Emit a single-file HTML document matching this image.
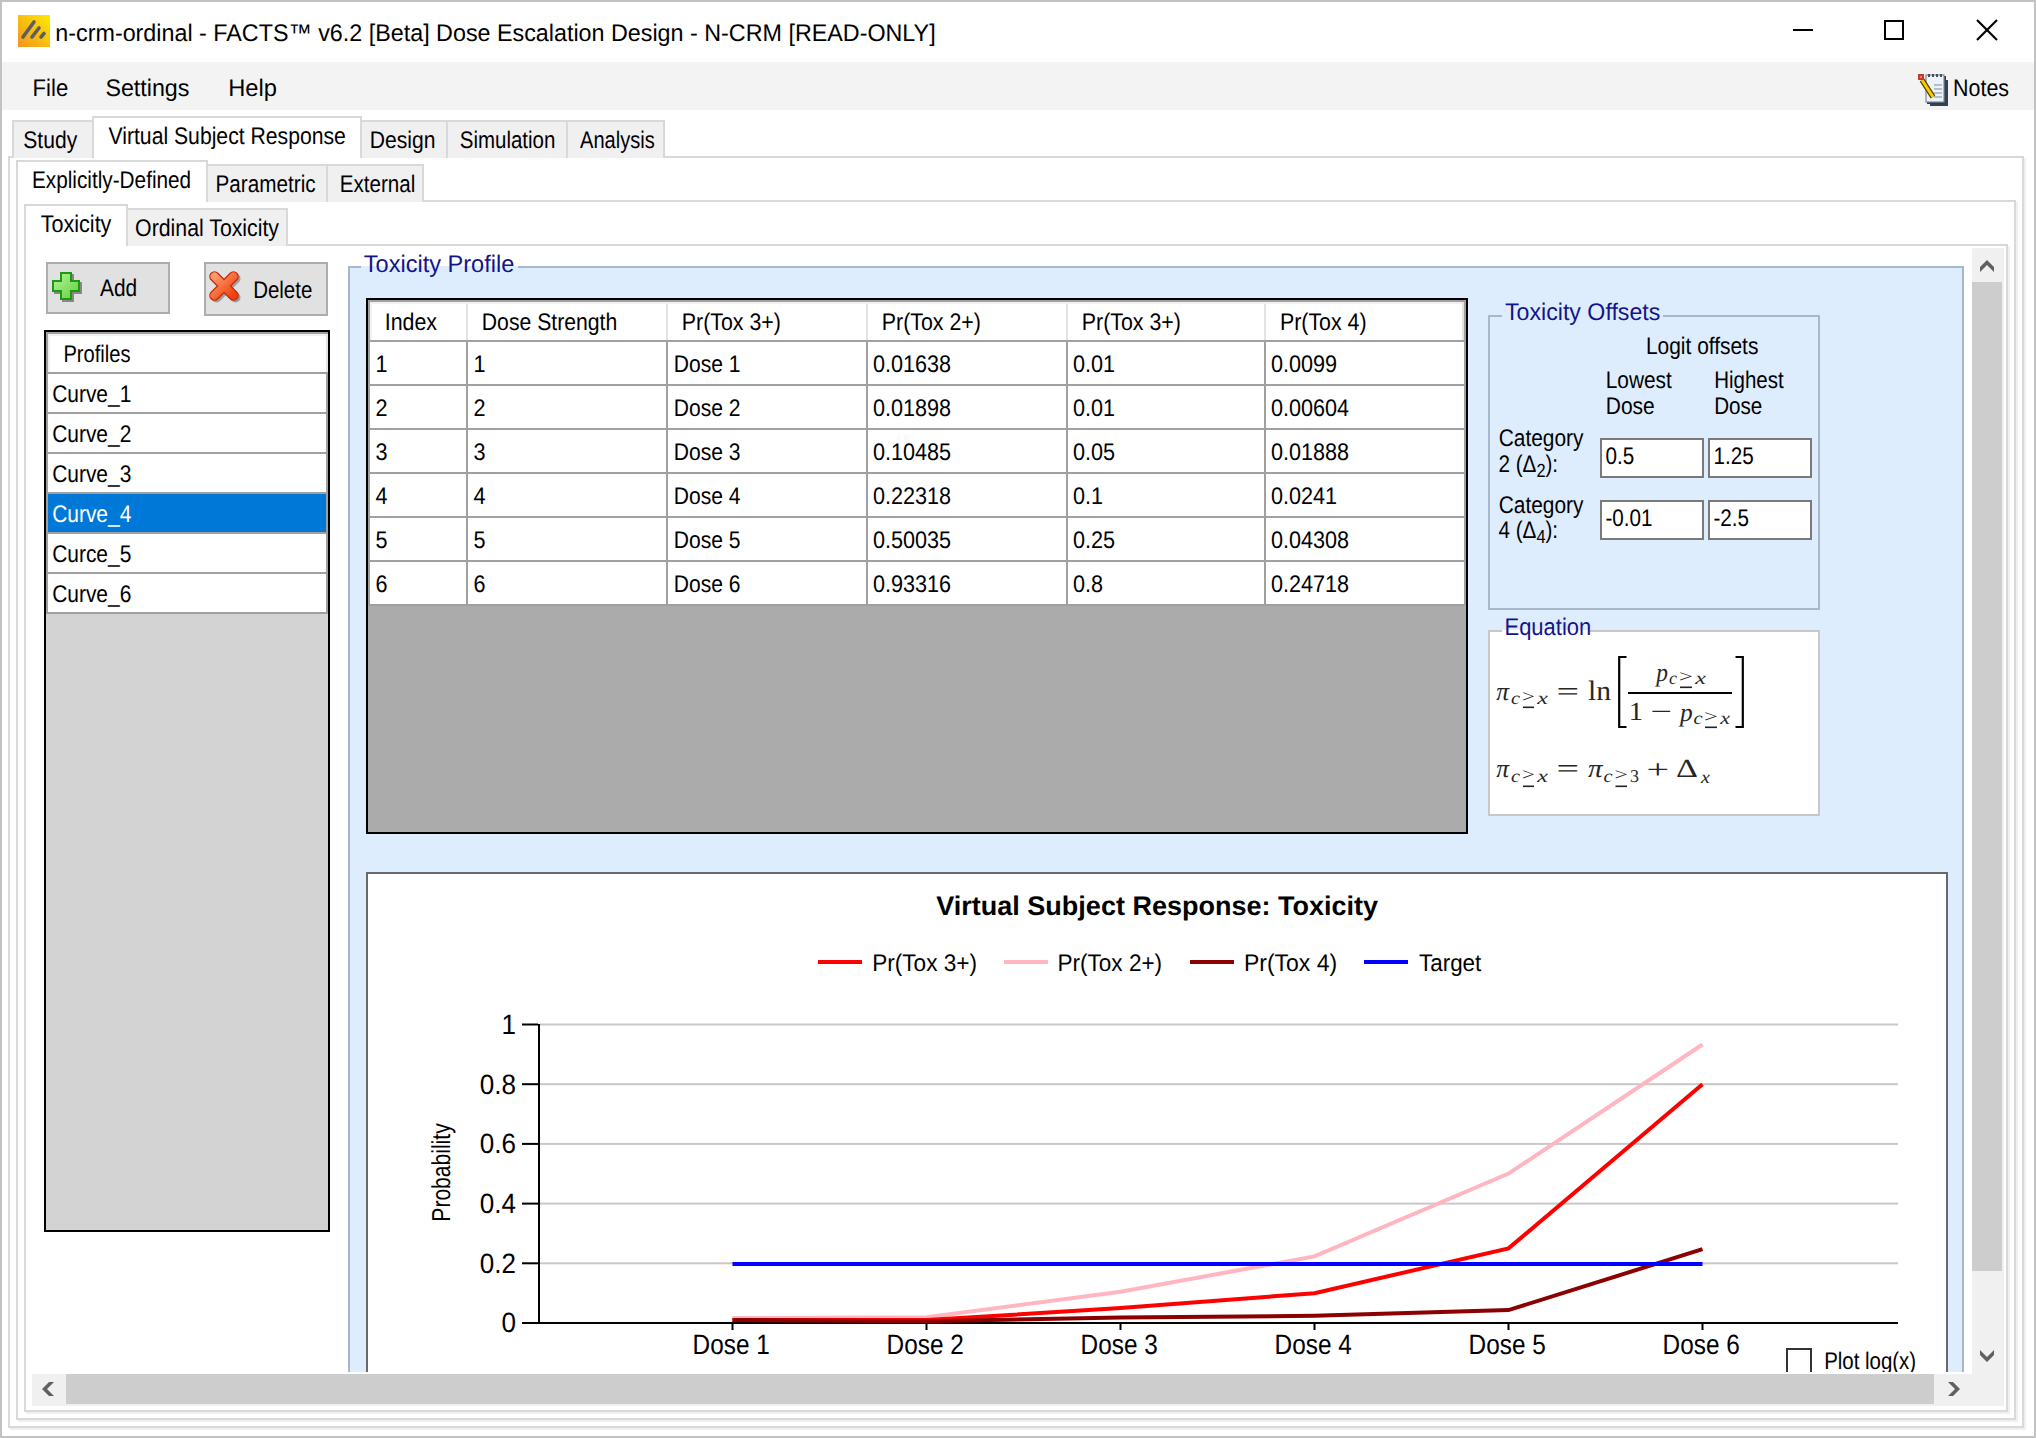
<!DOCTYPE html>
<html><head><meta charset="utf-8"><title>FACTS</title>
<style>html,body{margin:0;padding:0;background:#fff;overflow:hidden}svg{display:block}</style>
</head><body>
<svg width="2036" height="1438" viewBox="0 0 2036 1438" text-rendering="geometricPrecision">
<rect x="0" y="0" width="2036" height="1438" fill="#ffffff" />
<defs><linearGradient id="ig" x1="1" y1="0" x2="0" y2="1"><stop offset="0" stop-color="#ffea00"/><stop offset="1" stop-color="#f29420"/></linearGradient><linearGradient id="pg" x1="0" y1="0" x2="1" y2="1"><stop offset="0" stop-color="#b4f59a"/><stop offset="1" stop-color="#62cf3c"/></linearGradient><linearGradient id="xg" x1="0" y1="0" x2="1" y2="1"><stop offset="0" stop-color="#ff9a6a"/><stop offset="1" stop-color="#f0400c"/></linearGradient><clipPath id="clipPanel"><rect x="26" y="246" width="1946" height="1126"/></clipPath></defs>
<rect x="18" y="15" width="32" height="32" fill="url(#ig)" />
<g stroke="#5e5e5e" stroke-width="3.6" stroke-linecap="round"><line x1="23" y1="37" x2="34" y2="22"/><line x1="32" y1="37" x2="39" y2="28"/><line x1="41" y1="37" x2="44" y2="33.5"/></g>
<text transform="translate(55.33,40.8) scale(0.9711,1)" font-family="'Liberation Sans', sans-serif" font-size="24" font-weight="normal" font-style="normal" fill="#000" text-anchor="start" >n-crm-ordinal - FACTS™ v6.2 [Beta] Dose Escalation Design - N-CRM [READ-ONLY]</text>
<rect x="1793" y="29" width="20" height="2" fill="#000" />
<rect x="1884" y="20" width="20" height="2" fill="#000" />
<rect x="1884" y="38" width="20" height="2" fill="#000" />
<rect x="1884" y="20" width="2" height="20" fill="#000" />
<rect x="1902" y="20" width="2" height="20" fill="#000" />
<g stroke="#000" stroke-width="2.2"><line x1="1977" y1="20" x2="1997" y2="40"/><line x1="1997" y1="20" x2="1977" y2="40"/></g>
<rect x="2" y="62" width="2032" height="48" fill="#f3f3f3" />
<text transform="translate(32.58,95.5) scale(0.9217,1)" font-family="'Liberation Sans', sans-serif" font-size="24" font-weight="normal" font-style="normal" fill="#000" text-anchor="start" >File</text>
<text transform="translate(105.43,95.5) scale(0.9683,1)" font-family="'Liberation Sans', sans-serif" font-size="24" font-weight="normal" font-style="normal" fill="#000" text-anchor="start" >Settings</text>
<text transform="translate(228.21,95.5) scale(0.9873,1)" font-family="'Liberation Sans', sans-serif" font-size="24" font-weight="normal" font-style="normal" fill="#000" text-anchor="start" >Help</text>
<g><rect x="1927" y="76" width="19" height="28" fill="#2f3c4a"/><rect x="1926" y="75" width="18" height="27" fill="#eef3fb" stroke="#7d8a98" stroke-width="1.2"/><rect x="1945" y="80" width="3" height="26" fill="#34414f"/><rect x="1930" y="104" width="18" height="2" fill="#34414f"/><g fill="#45505c"><rect x="1928" y="74" width="2" height="3"/><rect x="1932" y="74" width="2" height="3"/><rect x="1936" y="74" width="2" height="3"/><rect x="1940" y="74" width="2" height="3"/></g><g stroke="#9fb3cc" stroke-width="1.6"><line x1="1934" y1="85" x2="1942" y2="85"/><line x1="1934" y1="89" x2="1942" y2="89"/><line x1="1934" y1="93" x2="1942" y2="93"/><line x1="1934" y1="97" x2="1942" y2="97"/></g><line x1="1933" y1="97" x2="1922" y2="80" stroke="#5a4400" stroke-width="5.5"/><line x1="1933" y1="97" x2="1922" y2="80" stroke="#f5d000" stroke-width="3"/><rect x="1918" y="74" width="6" height="6" fill="#c83a2a"/><rect x="1920" y="76" width="2" height="2" fill="#ff7a6a"/></g>
<text transform="translate(1953.11,96) scale(0.8915,1)" font-family="'Liberation Sans', sans-serif" font-size="24" font-weight="normal" font-style="normal" fill="#000" text-anchor="start" >Notes</text>
<rect x="8" y="156" width="2016" height="2" fill="#d9d9d9" />
<rect x="8" y="1426" width="2016" height="2" fill="#d9d9d9" />
<rect x="8" y="156" width="2" height="1272" fill="#d9d9d9" />
<rect x="2022" y="156" width="2" height="1272" fill="#d9d9d9" />
<rect x="2024" y="158" width="2" height="1272" fill="#f0f0f0" />
<rect x="10" y="1428" width="2016" height="2" fill="#f0f0f0" />
<rect x="12" y="120" width="82" height="38" fill="#f0f0f0" />
<rect x="12" y="120" width="82" height="2" fill="#d9d9d9" />
<rect x="12" y="120" width="2" height="38" fill="#d9d9d9" />
<rect x="92" y="120" width="2" height="38" fill="#d9d9d9" />
<rect x="360" y="120" width="88" height="38" fill="#f0f0f0" />
<rect x="360" y="120" width="88" height="2" fill="#d9d9d9" />
<rect x="360" y="120" width="2" height="38" fill="#d9d9d9" />
<rect x="446" y="120" width="2" height="38" fill="#d9d9d9" />
<rect x="446" y="120" width="122" height="38" fill="#f0f0f0" />
<rect x="446" y="120" width="122" height="2" fill="#d9d9d9" />
<rect x="446" y="120" width="2" height="38" fill="#d9d9d9" />
<rect x="566" y="120" width="2" height="38" fill="#d9d9d9" />
<rect x="566" y="120" width="99" height="38" fill="#f0f0f0" />
<rect x="566" y="120" width="99" height="2" fill="#d9d9d9" />
<rect x="566" y="120" width="2" height="38" fill="#d9d9d9" />
<rect x="663" y="120" width="2" height="38" fill="#d9d9d9" />
<rect x="92" y="116" width="270" height="42" fill="#ffffff" />
<rect x="92" y="116" width="270" height="2" fill="#d9d9d9" />
<rect x="92" y="116" width="2" height="42" fill="#d9d9d9" />
<rect x="360" y="116" width="2" height="42" fill="#d9d9d9" />
<text transform="translate(23.32,147.7) scale(0.8779,1)" font-family="'Liberation Sans', sans-serif" font-size="24" font-weight="normal" font-style="normal" fill="#000" text-anchor="start" >Study</text>
<text transform="translate(108.5,143.6) scale(0.882,1)" font-family="'Liberation Sans', sans-serif" font-size="24" font-weight="normal" font-style="normal" fill="#000" text-anchor="start" >Virtual Subject Response</text>
<text transform="translate(369.82,147.7) scale(0.8789,1)" font-family="'Liberation Sans', sans-serif" font-size="24" font-weight="normal" font-style="normal" fill="#000" text-anchor="start" >Design</text>
<text transform="translate(459.75,147.7) scale(0.8532,1)" font-family="'Liberation Sans', sans-serif" font-size="24" font-weight="normal" font-style="normal" fill="#000" text-anchor="start" >Simulation</text>
<text transform="translate(580.0,147.7) scale(0.8359,1)" font-family="'Liberation Sans', sans-serif" font-size="24" font-weight="normal" font-style="normal" fill="#000" text-anchor="start" >Analysis</text>
<rect x="16" y="200" width="2000" height="2" fill="#d9d9d9" />
<rect x="16" y="1418" width="2000" height="2" fill="#d9d9d9" />
<rect x="16" y="200" width="2" height="1220" fill="#d9d9d9" />
<rect x="2014" y="200" width="2" height="1220" fill="#d9d9d9" />
<rect x="2016" y="202" width="2" height="1220" fill="#f0f0f0" />
<rect x="18" y="1420" width="2000" height="2" fill="#f0f0f0" />
<rect x="206" y="164" width="122" height="38" fill="#f0f0f0" />
<rect x="206" y="164" width="122" height="2" fill="#d9d9d9" />
<rect x="206" y="164" width="2" height="38" fill="#d9d9d9" />
<rect x="326" y="164" width="2" height="38" fill="#d9d9d9" />
<rect x="326" y="164" width="98" height="38" fill="#f0f0f0" />
<rect x="326" y="164" width="98" height="2" fill="#d9d9d9" />
<rect x="326" y="164" width="2" height="38" fill="#d9d9d9" />
<rect x="422" y="164" width="2" height="38" fill="#d9d9d9" />
<rect x="16" y="160" width="192" height="42" fill="#ffffff" />
<rect x="16" y="160" width="192" height="2" fill="#d9d9d9" />
<rect x="16" y="160" width="2" height="42" fill="#d9d9d9" />
<rect x="206" y="160" width="2" height="42" fill="#d9d9d9" />
<text transform="translate(31.93,187.8) scale(0.8651,1)" font-family="'Liberation Sans', sans-serif" font-size="24" font-weight="normal" font-style="normal" fill="#000" text-anchor="start" >Explicitly-Defined</text>
<text transform="translate(215.54,191.9) scale(0.8624,1)" font-family="'Liberation Sans', sans-serif" font-size="24" font-weight="normal" font-style="normal" fill="#000" text-anchor="start" >Parametric</text>
<text transform="translate(339.84,191.6) scale(0.8575,1)" font-family="'Liberation Sans', sans-serif" font-size="24" font-weight="normal" font-style="normal" fill="#000" text-anchor="start" >External</text>
<rect x="24" y="244" width="1984" height="2" fill="#d9d9d9" />
<rect x="24" y="1410" width="1984" height="2" fill="#d9d9d9" />
<rect x="24" y="244" width="2" height="1168" fill="#d9d9d9" />
<rect x="2006" y="244" width="2" height="1168" fill="#d9d9d9" />
<rect x="2008" y="246" width="2" height="1168" fill="#f0f0f0" />
<rect x="26" y="1412" width="1984" height="2" fill="#f0f0f0" />
<rect x="126" y="208" width="162" height="38" fill="#f0f0f0" />
<rect x="126" y="208" width="162" height="2" fill="#d9d9d9" />
<rect x="126" y="208" width="2" height="38" fill="#d9d9d9" />
<rect x="286" y="208" width="2" height="38" fill="#d9d9d9" />
<rect x="24" y="204" width="104" height="42" fill="#ffffff" />
<rect x="24" y="204" width="104" height="2" fill="#d9d9d9" />
<rect x="24" y="204" width="2" height="42" fill="#d9d9d9" />
<rect x="126" y="204" width="2" height="42" fill="#d9d9d9" />
<text transform="translate(40.7,232) scale(0.8986,1)" font-family="'Liberation Sans', sans-serif" font-size="24" font-weight="normal" font-style="normal" fill="#000" text-anchor="start" >Toxicity</text>
<text transform="translate(135.11,235.6) scale(0.8867,1)" font-family="'Liberation Sans', sans-serif" font-size="24" font-weight="normal" font-style="normal" fill="#000" text-anchor="start" >Ordinal Toxicity</text>
<g clip-path="url(#clipPanel)">
<rect x="46" y="262" width="124" height="52" fill="#e1e1e1" />
<rect x="46" y="262" width="124" height="2" fill="#adadad" />
<rect x="46" y="312" width="124" height="2" fill="#adadad" />
<rect x="46" y="262" width="2" height="52" fill="#adadad" />
<rect x="168" y="262" width="2" height="52" fill="#adadad" />
<path d="M60 272 H72 V280 H80 V292 H72 V300 H60 V292 H52 V280 H60 Z" fill="#6a6a6a" opacity="0.75" transform="translate(2,2)"/>
<path d="M61 273 H71 V281 H79 V291 H71 V299 H61 V291 H53 V281 H61 Z" fill="url(#pg)" stroke="#1c9a12" stroke-width="2"/>
<text transform="translate(100.0,295.7) scale(0.8705,1)" font-family="'Liberation Sans', sans-serif" font-size="24" font-weight="normal" font-style="normal" fill="#000" text-anchor="start" >Add</text>
<rect x="204" y="262" width="124" height="54" fill="#e1e1e1" />
<rect x="204" y="262" width="124" height="2" fill="#adadad" />
<rect x="204" y="314" width="124" height="2" fill="#adadad" />
<rect x="204" y="262" width="2" height="54" fill="#adadad" />
<rect x="326" y="262" width="2" height="54" fill="#adadad" />
<g stroke-linecap="round"><path d="M214.5 276.5 L233.5 295.5 M233.5 276.5 L214.5 295.5" stroke="#707070" stroke-width="10" opacity="0.6" transform="translate(2,2)"/><path d="M214.5 276.5 L233.5 295.5 M233.5 276.5 L214.5 295.5" stroke="#c8280c" stroke-width="10.5"/><path d="M214.5 276.5 L233.5 295.5 M233.5 276.5 L214.5 295.5" stroke="url(#xg)" stroke-width="8"/></g>
<text transform="translate(253.15,297.5) scale(0.8526,1)" font-family="'Liberation Sans', sans-serif" font-size="24" font-weight="normal" font-style="normal" fill="#000" text-anchor="start" >Delete</text>
<rect x="44" y="330" width="286" height="902" fill="#d3d3d3" />
<rect x="44" y="330" width="286" height="2" fill="#000000" />
<rect x="44" y="1230" width="286" height="2" fill="#000000" />
<rect x="44" y="330" width="2" height="902" fill="#000000" />
<rect x="328" y="330" width="2" height="902" fill="#000000" />
<rect x="46" y="332" width="282" height="282" fill="#ffffff" />
<rect x="46" y="332" width="282" height="2" fill="#a0a0a0" />
<rect x="46" y="332" width="2" height="282" fill="#a0a0a0" />
<rect x="48" y="334" width="278" height="2" fill="#f0f0f0" />
<rect x="48" y="334" width="2" height="38" fill="#f0f0f0" />
<rect x="326" y="334" width="2" height="38" fill="#e3e3e3" />
<rect x="46" y="372" width="282" height="2" fill="#a0a0a0" />
<text transform="translate(63.46,361.7) scale(0.8377,1)" font-family="'Liberation Sans', sans-serif" font-size="24" font-weight="normal" font-style="normal" fill="#000" text-anchor="start" >Profiles</text>
<rect x="46" y="412" width="282" height="2" fill="#a0a0a0" />
<text transform="translate(52.13,402) scale(0.8728,1)" font-family="'Liberation Sans', sans-serif" font-size="24" font-weight="normal" font-style="normal" fill="#000" text-anchor="start" >Curve_1</text>
<rect x="46" y="452" width="282" height="2" fill="#a0a0a0" />
<text transform="translate(52.13,442) scale(0.8728,1)" font-family="'Liberation Sans', sans-serif" font-size="24" font-weight="normal" font-style="normal" fill="#000" text-anchor="start" >Curve_2</text>
<rect x="46" y="492" width="282" height="2" fill="#a0a0a0" />
<text transform="translate(52.13,482) scale(0.8728,1)" font-family="'Liberation Sans', sans-serif" font-size="24" font-weight="normal" font-style="normal" fill="#000" text-anchor="start" >Curve_3</text>
<rect x="48" y="494" width="278" height="38" fill="#0078d7" />
<rect x="46" y="532" width="282" height="2" fill="#a0a0a0" />
<text transform="translate(52.13,522) scale(0.8728,1)" font-family="'Liberation Sans', sans-serif" font-size="24" font-weight="normal" font-style="normal" fill="#fff" text-anchor="start" >Curve_4</text>
<rect x="46" y="572" width="282" height="2" fill="#a0a0a0" />
<text transform="translate(52.13,562) scale(0.8728,1)" font-family="'Liberation Sans', sans-serif" font-size="24" font-weight="normal" font-style="normal" fill="#000" text-anchor="start" >Curce_5</text>
<rect x="46" y="612" width="282" height="2" fill="#a0a0a0" />
<text transform="translate(52.13,602) scale(0.8728,1)" font-family="'Liberation Sans', sans-serif" font-size="24" font-weight="normal" font-style="normal" fill="#000" text-anchor="start" >Curve_6</text>
<rect x="46" y="374" width="2" height="240" fill="#a0a0a0" />
<rect x="326" y="374" width="2" height="240" fill="#a0a0a0" />
<rect x="348" y="266" width="1616" height="1200" fill="#deedfd" />
<rect x="348" y="266" width="13" height="2" fill="#a7b8cb" />
<rect x="518" y="266" width="1446" height="2" fill="#a7b8cb" />
<rect x="348" y="266" width="2" height="1200" fill="#a7b8cb" />
<rect x="1962" y="266" width="2" height="1200" fill="#a7b8cb" />
<text transform="translate(363.8,271.9) scale(0.9809,1)" font-family="'Liberation Sans', sans-serif" font-size="24" font-weight="normal" font-style="normal" fill="#14148c" text-anchor="start" >Toxicity Profile</text>
<rect x="366" y="298" width="1102" height="536" fill="#ababab" />
<rect x="366" y="298" width="1102" height="2" fill="#000000" />
<rect x="366" y="832" width="1102" height="2" fill="#000000" />
<rect x="366" y="298" width="2" height="536" fill="#000000" />
<rect x="1466" y="298" width="2" height="536" fill="#000000" />
<rect x="368" y="300" width="1096" height="306" fill="#ffffff" />
<rect x="368" y="300" width="1098" height="2" fill="#a0a0a0" />
<rect x="368" y="300" width="2" height="306" fill="#a0a0a0" />
<rect x="370" y="302" width="1094" height="2" fill="#f0f0f0" />
<rect x="370" y="302" width="2" height="38" fill="#f0f0f0" />
<rect x="1462" y="302" width="2" height="38" fill="#e3e3e3" />
<rect x="368" y="340" width="1096" height="2" fill="#a0a0a0" />
<rect x="466" y="304" width="2" height="36" fill="#e3e3e3" />
<rect x="466" y="342" width="2" height="264" fill="#a0a0a0" />
<rect x="666" y="304" width="2" height="36" fill="#e3e3e3" />
<rect x="666" y="342" width="2" height="264" fill="#a0a0a0" />
<rect x="866" y="304" width="2" height="36" fill="#e3e3e3" />
<rect x="866" y="342" width="2" height="264" fill="#a0a0a0" />
<rect x="1066" y="304" width="2" height="36" fill="#e3e3e3" />
<rect x="1066" y="342" width="2" height="264" fill="#a0a0a0" />
<rect x="1264" y="304" width="2" height="36" fill="#e3e3e3" />
<rect x="1264" y="342" width="2" height="264" fill="#a0a0a0" />
<rect x="1464" y="300" width="2" height="306" fill="#a0a0a0" />
<rect x="368" y="342" width="2" height="264" fill="#a0a0a0" />
<rect x="368" y="384" width="1096" height="2" fill="#a0a0a0" />
<rect x="368" y="428" width="1096" height="2" fill="#a0a0a0" />
<rect x="368" y="472" width="1096" height="2" fill="#a0a0a0" />
<rect x="368" y="516" width="1096" height="2" fill="#a0a0a0" />
<rect x="368" y="560" width="1096" height="2" fill="#a0a0a0" />
<rect x="368" y="604" width="1096" height="2" fill="#a0a0a0" />
<text transform="translate(384.72,330) scale(0.8905,1)" font-family="'Liberation Sans', sans-serif" font-size="24" font-weight="normal" font-style="normal" fill="#000" text-anchor="start" >Index</text>
<text transform="translate(481.82,330) scale(0.8823,1)" font-family="'Liberation Sans', sans-serif" font-size="24" font-weight="normal" font-style="normal" fill="#000" text-anchor="start" >Dose Strength</text>
<text transform="translate(681.81,330) scale(0.8896,1)" font-family="'Liberation Sans', sans-serif" font-size="24" font-weight="normal" font-style="normal" fill="#000" text-anchor="start" >Pr(Tox 3+)</text>
<text transform="translate(881.81,330) scale(0.8896,1)" font-family="'Liberation Sans', sans-serif" font-size="24" font-weight="normal" font-style="normal" fill="#000" text-anchor="start" >Pr(Tox 2+)</text>
<text transform="translate(1081.81,330) scale(0.8896,1)" font-family="'Liberation Sans', sans-serif" font-size="24" font-weight="normal" font-style="normal" fill="#000" text-anchor="start" >Pr(Tox 3+)</text>
<text transform="translate(1279.91,330) scale(0.8904,1)" font-family="'Liberation Sans', sans-serif" font-size="24" font-weight="normal" font-style="normal" fill="#000" text-anchor="start" >Pr(Tox 4)</text>
<text transform="translate(375.5,371.9) scale(0.9,1)" font-family="'Liberation Sans', sans-serif" font-size="24" font-weight="normal" font-style="normal" fill="#000" text-anchor="start" >1</text>
<text transform="translate(473.5,371.9) scale(0.9,1)" font-family="'Liberation Sans', sans-serif" font-size="24" font-weight="normal" font-style="normal" fill="#000" text-anchor="start" >1</text>
<text transform="translate(673.72,371.9) scale(0.8782,1)" font-family="'Liberation Sans', sans-serif" font-size="24" font-weight="normal" font-style="normal" fill="#000" text-anchor="start" >Dose 1</text>
<text transform="translate(873,371.9) scale(0.9,1)" font-family="'Liberation Sans', sans-serif" font-size="24" font-weight="normal" font-style="normal" fill="#000" text-anchor="start" >0.01638</text>
<text transform="translate(1073,371.9) scale(0.9,1)" font-family="'Liberation Sans', sans-serif" font-size="24" font-weight="normal" font-style="normal" fill="#000" text-anchor="start" >0.01</text>
<text transform="translate(1271,371.9) scale(0.9,1)" font-family="'Liberation Sans', sans-serif" font-size="24" font-weight="normal" font-style="normal" fill="#000" text-anchor="start" >0.0099</text>
<text transform="translate(375.5,415.9) scale(0.9,1)" font-family="'Liberation Sans', sans-serif" font-size="24" font-weight="normal" font-style="normal" fill="#000" text-anchor="start" >2</text>
<text transform="translate(473.5,415.9) scale(0.9,1)" font-family="'Liberation Sans', sans-serif" font-size="24" font-weight="normal" font-style="normal" fill="#000" text-anchor="start" >2</text>
<text transform="translate(673.72,415.9) scale(0.8782,1)" font-family="'Liberation Sans', sans-serif" font-size="24" font-weight="normal" font-style="normal" fill="#000" text-anchor="start" >Dose 2</text>
<text transform="translate(873,415.9) scale(0.9,1)" font-family="'Liberation Sans', sans-serif" font-size="24" font-weight="normal" font-style="normal" fill="#000" text-anchor="start" >0.01898</text>
<text transform="translate(1073,415.9) scale(0.9,1)" font-family="'Liberation Sans', sans-serif" font-size="24" font-weight="normal" font-style="normal" fill="#000" text-anchor="start" >0.01</text>
<text transform="translate(1271,415.9) scale(0.9,1)" font-family="'Liberation Sans', sans-serif" font-size="24" font-weight="normal" font-style="normal" fill="#000" text-anchor="start" >0.00604</text>
<text transform="translate(375.5,459.9) scale(0.9,1)" font-family="'Liberation Sans', sans-serif" font-size="24" font-weight="normal" font-style="normal" fill="#000" text-anchor="start" >3</text>
<text transform="translate(473.5,459.9) scale(0.9,1)" font-family="'Liberation Sans', sans-serif" font-size="24" font-weight="normal" font-style="normal" fill="#000" text-anchor="start" >3</text>
<text transform="translate(673.72,459.9) scale(0.8782,1)" font-family="'Liberation Sans', sans-serif" font-size="24" font-weight="normal" font-style="normal" fill="#000" text-anchor="start" >Dose 3</text>
<text transform="translate(873,459.9) scale(0.9,1)" font-family="'Liberation Sans', sans-serif" font-size="24" font-weight="normal" font-style="normal" fill="#000" text-anchor="start" >0.10485</text>
<text transform="translate(1073,459.9) scale(0.9,1)" font-family="'Liberation Sans', sans-serif" font-size="24" font-weight="normal" font-style="normal" fill="#000" text-anchor="start" >0.05</text>
<text transform="translate(1271,459.9) scale(0.9,1)" font-family="'Liberation Sans', sans-serif" font-size="24" font-weight="normal" font-style="normal" fill="#000" text-anchor="start" >0.01888</text>
<text transform="translate(375.5,503.9) scale(0.9,1)" font-family="'Liberation Sans', sans-serif" font-size="24" font-weight="normal" font-style="normal" fill="#000" text-anchor="start" >4</text>
<text transform="translate(473.5,503.9) scale(0.9,1)" font-family="'Liberation Sans', sans-serif" font-size="24" font-weight="normal" font-style="normal" fill="#000" text-anchor="start" >4</text>
<text transform="translate(673.72,503.9) scale(0.8782,1)" font-family="'Liberation Sans', sans-serif" font-size="24" font-weight="normal" font-style="normal" fill="#000" text-anchor="start" >Dose 4</text>
<text transform="translate(873,503.9) scale(0.9,1)" font-family="'Liberation Sans', sans-serif" font-size="24" font-weight="normal" font-style="normal" fill="#000" text-anchor="start" >0.22318</text>
<text transform="translate(1073,503.9) scale(0.9,1)" font-family="'Liberation Sans', sans-serif" font-size="24" font-weight="normal" font-style="normal" fill="#000" text-anchor="start" >0.1</text>
<text transform="translate(1271,503.9) scale(0.9,1)" font-family="'Liberation Sans', sans-serif" font-size="24" font-weight="normal" font-style="normal" fill="#000" text-anchor="start" >0.0241</text>
<text transform="translate(375.5,547.9) scale(0.9,1)" font-family="'Liberation Sans', sans-serif" font-size="24" font-weight="normal" font-style="normal" fill="#000" text-anchor="start" >5</text>
<text transform="translate(473.5,547.9) scale(0.9,1)" font-family="'Liberation Sans', sans-serif" font-size="24" font-weight="normal" font-style="normal" fill="#000" text-anchor="start" >5</text>
<text transform="translate(673.72,547.9) scale(0.8782,1)" font-family="'Liberation Sans', sans-serif" font-size="24" font-weight="normal" font-style="normal" fill="#000" text-anchor="start" >Dose 5</text>
<text transform="translate(873,547.9) scale(0.9,1)" font-family="'Liberation Sans', sans-serif" font-size="24" font-weight="normal" font-style="normal" fill="#000" text-anchor="start" >0.50035</text>
<text transform="translate(1073,547.9) scale(0.9,1)" font-family="'Liberation Sans', sans-serif" font-size="24" font-weight="normal" font-style="normal" fill="#000" text-anchor="start" >0.25</text>
<text transform="translate(1271,547.9) scale(0.9,1)" font-family="'Liberation Sans', sans-serif" font-size="24" font-weight="normal" font-style="normal" fill="#000" text-anchor="start" >0.04308</text>
<text transform="translate(375.5,591.9) scale(0.9,1)" font-family="'Liberation Sans', sans-serif" font-size="24" font-weight="normal" font-style="normal" fill="#000" text-anchor="start" >6</text>
<text transform="translate(473.5,591.9) scale(0.9,1)" font-family="'Liberation Sans', sans-serif" font-size="24" font-weight="normal" font-style="normal" fill="#000" text-anchor="start" >6</text>
<text transform="translate(673.72,591.9) scale(0.8782,1)" font-family="'Liberation Sans', sans-serif" font-size="24" font-weight="normal" font-style="normal" fill="#000" text-anchor="start" >Dose 6</text>
<text transform="translate(873,591.9) scale(0.9,1)" font-family="'Liberation Sans', sans-serif" font-size="24" font-weight="normal" font-style="normal" fill="#000" text-anchor="start" >0.93316</text>
<text transform="translate(1073,591.9) scale(0.9,1)" font-family="'Liberation Sans', sans-serif" font-size="24" font-weight="normal" font-style="normal" fill="#000" text-anchor="start" >0.8</text>
<text transform="translate(1271,591.9) scale(0.9,1)" font-family="'Liberation Sans', sans-serif" font-size="24" font-weight="normal" font-style="normal" fill="#000" text-anchor="start" >0.24718</text>
<rect x="1488" y="315" width="14" height="2" fill="#a7b8cb" />
<rect x="1663" y="315" width="157" height="2" fill="#a7b8cb" />
<rect x="1488" y="315" width="2" height="295" fill="#a7b8cb" />
<rect x="1818" y="315" width="2" height="295" fill="#a7b8cb" />
<rect x="1488" y="608" width="332" height="2" fill="#a7b8cb" />
<text transform="translate(1505.0,319.7) scale(0.965,1)" font-family="'Liberation Sans', sans-serif" font-size="24" font-weight="normal" font-style="normal" fill="#14148c" text-anchor="start" >Toxicity Offsets</text>
<text transform="translate(1645.93,353.8) scale(0.872,1)" font-family="'Liberation Sans', sans-serif" font-size="24" font-weight="normal" font-style="normal" fill="#000" text-anchor="start" >Logit offsets</text>
<text transform="translate(1605.73,387.6) scale(0.869,1)" font-family="'Liberation Sans', sans-serif" font-size="24" font-weight="normal" font-style="normal" fill="#000" text-anchor="start" >Lowest</text>
<text transform="translate(1605.73,413.6) scale(0.8742,1)" font-family="'Liberation Sans', sans-serif" font-size="24" font-weight="normal" font-style="normal" fill="#000" text-anchor="start" >Dose</text>
<text transform="translate(1714.15,387.6) scale(0.8549,1)" font-family="'Liberation Sans', sans-serif" font-size="24" font-weight="normal" font-style="normal" fill="#000" text-anchor="start" >Highest</text>
<text transform="translate(1714.14,413.6) scale(0.8596,1)" font-family="'Liberation Sans', sans-serif" font-size="24" font-weight="normal" font-style="normal" fill="#000" text-anchor="start" >Dose</text>
<text transform="translate(1498.73,445.5) scale(0.8705,1)" font-family="'Liberation Sans', sans-serif" font-size="24" font-weight="normal" font-style="normal" fill="#000" text-anchor="start" >Category</text>
<text transform="translate(1498.5,471.5) scale(0.86,1)" font-family="'Liberation Sans', sans-serif" font-size="24">2 (Δ<tspan font-size="19" dy="5">2</tspan><tspan dy="-5">):</tspan></text>
<text transform="translate(1498.73,512.5) scale(0.8705,1)" font-family="'Liberation Sans', sans-serif" font-size="24" font-weight="normal" font-style="normal" fill="#000" text-anchor="start" >Category</text>
<text transform="translate(1498.5,537.7) scale(0.86,1)" font-family="'Liberation Sans', sans-serif" font-size="24">4 (Δ<tspan font-size="19" dy="5">4</tspan><tspan dy="-5">):</tspan></text>
<rect x="1600" y="438" width="104" height="40" fill="#ffffff" />
<rect x="1600" y="438" width="104" height="2" fill="#7a7a7a" />
<rect x="1600" y="476" width="104" height="2" fill="#7a7a7a" />
<rect x="1600" y="438" width="2" height="40" fill="#7a7a7a" />
<rect x="1702" y="438" width="2" height="40" fill="#7a7a7a" />
<text transform="translate(1605.5,464.4) scale(0.86,1)" font-family="'Liberation Sans', sans-serif" font-size="24" font-weight="normal" font-style="normal" fill="#000" text-anchor="start" >0.5</text>
<rect x="1708" y="438" width="104" height="40" fill="#ffffff" />
<rect x="1708" y="438" width="104" height="2" fill="#7a7a7a" />
<rect x="1708" y="476" width="104" height="2" fill="#7a7a7a" />
<rect x="1708" y="438" width="2" height="40" fill="#7a7a7a" />
<rect x="1810" y="438" width="2" height="40" fill="#7a7a7a" />
<text transform="translate(1713.5,464.4) scale(0.86,1)" font-family="'Liberation Sans', sans-serif" font-size="24" font-weight="normal" font-style="normal" fill="#000" text-anchor="start" >1.25</text>
<rect x="1600" y="500" width="104" height="40" fill="#ffffff" />
<rect x="1600" y="500" width="104" height="2" fill="#7a7a7a" />
<rect x="1600" y="538" width="104" height="2" fill="#7a7a7a" />
<rect x="1600" y="500" width="2" height="40" fill="#7a7a7a" />
<rect x="1702" y="500" width="2" height="40" fill="#7a7a7a" />
<text transform="translate(1605.5,526.4) scale(0.86,1)" font-family="'Liberation Sans', sans-serif" font-size="24" font-weight="normal" font-style="normal" fill="#000" text-anchor="start" >-0.01</text>
<rect x="1708" y="500" width="104" height="40" fill="#ffffff" />
<rect x="1708" y="500" width="104" height="2" fill="#7a7a7a" />
<rect x="1708" y="538" width="104" height="2" fill="#7a7a7a" />
<rect x="1708" y="500" width="2" height="40" fill="#7a7a7a" />
<rect x="1810" y="500" width="2" height="40" fill="#7a7a7a" />
<text transform="translate(1713.5,526.4) scale(0.86,1)" font-family="'Liberation Sans', sans-serif" font-size="24" font-weight="normal" font-style="normal" fill="#000" text-anchor="start" >-2.5</text>
<rect x="1488" y="630" width="332" height="186" fill="#ffffff" />
<rect x="1488" y="630" width="14" height="2" fill="#c8c8c8" />
<rect x="1590" y="630" width="230" height="2" fill="#c8c8c8" />
<rect x="1488" y="630" width="2" height="186" fill="#c8c8c8" />
<rect x="1818" y="630" width="2" height="186" fill="#c8c8c8" />
<rect x="1488" y="814" width="332" height="2" fill="#c8c8c8" />
<text transform="translate(1504.48,635.2) scale(0.9156,1)" font-family="'Liberation Sans', sans-serif" font-size="24" font-weight="normal" font-style="normal" fill="#14148c" text-anchor="start" >Equation</text>
<text transform="translate(1496.3,700) scale(0.9786,1)" font-family="'Liberation Serif', serif" font-size="26" font-weight="normal" font-style="italic" fill="#262626" text-anchor="start" >π</text>
<text transform="translate(1511.0,703.6) scale(1.125,1)" font-family="'Liberation Serif', serif" font-size="18" font-weight="normal" font-style="italic" fill="#262626" text-anchor="start" >c</text>
<text transform="translate(1522.0,702) scale(1.3333,1)" font-family="'Liberation Serif', serif" font-size="17" font-weight="normal" font-style="normal" fill="#262626" text-anchor="start" >&gt;</text>
<rect x="1523" y="706.5" width="11" height="1.6" fill="#222" />
<text transform="translate(1537.33,703.6) scale(1.3333,1)" font-family="'Liberation Serif', serif" font-size="18" font-weight="normal" font-style="italic" fill="#262626" text-anchor="start" >x</text>
<text transform="translate(1556.46,700) scale(1.5385,1)" font-family="'Liberation Serif', serif" font-size="26" font-weight="normal" font-style="normal" fill="#262626" text-anchor="start" >=</text>
<text transform="translate(1588.0,700) scale(1.056,1)" font-family="'Liberation Serif', serif" font-size="28" font-weight="normal" font-style="normal" fill="#262626" text-anchor="start" >ln</text>
<path d="M1626.5 657 H1619.2 V727 H1626.5" fill="none" stroke="#000" stroke-width="2.2"/>
<path d="M1735.5 657 H1742.8 V727 H1735.5" fill="none" stroke="#000" stroke-width="2.2"/>
<text transform="translate(1656.3,680.5) scale(0.9,1)" font-family="'Liberation Serif', serif" font-size="26" font-weight="normal" font-style="italic" fill="#262626" text-anchor="start" >p</text>
<text transform="translate(1669.0,683.6) scale(1.0,1)" font-family="'Liberation Serif', serif" font-size="18" font-weight="normal" font-style="italic" fill="#262626" text-anchor="start" >c</text>
<text transform="translate(1679.0,682) scale(1.4444,1)" font-family="'Liberation Serif', serif" font-size="17" font-weight="normal" font-style="normal" fill="#262626" text-anchor="start" >&gt;</text>
<rect x="1680" y="686.5" width="12" height="1.6" fill="#222" />
<text transform="translate(1695.33,683.6) scale(1.3333,1)" font-family="'Liberation Serif', serif" font-size="18" font-weight="normal" font-style="italic" fill="#262626" text-anchor="start" >x</text>
<rect x="1628" y="692" width="104" height="2" fill="#000" />
<text transform="translate(1628.8,720) scale(1.1,1)" font-family="'Liberation Serif', serif" font-size="26" font-weight="normal" font-style="normal" fill="#262626" text-anchor="start" >1</text>
<text transform="translate(1650.54,720) scale(1.4615,1)" font-family="'Liberation Serif', serif" font-size="26" font-weight="normal" font-style="normal" fill="#262626" text-anchor="start" >−</text>
<text transform="translate(1679.95,720.5) scale(0.9733,1)" font-family="'Liberation Serif', serif" font-size="26" font-weight="normal" font-style="italic" fill="#262626" text-anchor="start" >p</text>
<text transform="translate(1693.5,723.6) scale(1.1375,1)" font-family="'Liberation Serif', serif" font-size="18" font-weight="normal" font-style="italic" fill="#262626" text-anchor="start" >c</text>
<text transform="translate(1704.0,722) scale(1.4444,1)" font-family="'Liberation Serif', serif" font-size="17" font-weight="normal" font-style="normal" fill="#262626" text-anchor="start" >&gt;</text>
<rect x="1705" y="726.5" width="12" height="1.6" fill="#222" />
<text transform="translate(1720.22,723.6) scale(1.2222,1)" font-family="'Liberation Serif', serif" font-size="18" font-weight="normal" font-style="italic" fill="#262626" text-anchor="start" >x</text>
<text transform="translate(1496.3,777) scale(0.9786,1)" font-family="'Liberation Serif', serif" font-size="26" font-weight="normal" font-style="italic" fill="#262626" text-anchor="start" >π</text>
<text transform="translate(1511.0,781.7) scale(1.125,1)" font-family="'Liberation Serif', serif" font-size="18" font-weight="normal" font-style="italic" fill="#262626" text-anchor="start" >c</text>
<text transform="translate(1522.0,780) scale(1.3333,1)" font-family="'Liberation Serif', serif" font-size="17" font-weight="normal" font-style="normal" fill="#262626" text-anchor="start" >&gt;</text>
<rect x="1523" y="785.5" width="11" height="1.6" fill="#222" />
<text transform="translate(1537.33,781.7) scale(1.3333,1)" font-family="'Liberation Serif', serif" font-size="18" font-weight="normal" font-style="italic" fill="#262626" text-anchor="start" >x</text>
<text transform="translate(1556.46,777) scale(1.5385,1)" font-family="'Liberation Serif', serif" font-size="26" font-weight="normal" font-style="normal" fill="#262626" text-anchor="start" >=</text>
<text transform="translate(1588.0,777) scale(1.1143,1)" font-family="'Liberation Serif', serif" font-size="26" font-weight="normal" font-style="italic" fill="#262626" text-anchor="start" >π</text>
<text transform="translate(1603.6,781.7) scale(1.125,1)" font-family="'Liberation Serif', serif" font-size="18" font-weight="normal" font-style="italic" fill="#262626" text-anchor="start" >c</text>
<text transform="translate(1614.5,780) scale(1.3889,1)" font-family="'Liberation Serif', serif" font-size="17" font-weight="normal" font-style="normal" fill="#262626" text-anchor="start" >&gt;</text>
<rect x="1615.5" y="785.5" width="11.5" height="1.6" fill="#222" />
<text transform="translate(1630.0,781.7) scale(1.0,1)" font-family="'Liberation Serif', serif" font-size="18" font-weight="normal" font-style="normal" fill="#262626" text-anchor="start" >3</text>
<text transform="translate(1646.46,778) scale(1.5385,1)" font-family="'Liberation Serif', serif" font-size="26" font-weight="normal" font-style="normal" fill="#262626" text-anchor="start" >+</text>
<text transform="translate(1676.0,777) scale(1.3125,1)" font-family="'Liberation Serif', serif" font-size="26" font-weight="normal" font-style="normal" fill="#262626" text-anchor="start" >Δ</text>
<text transform="translate(1701.11,782.6) scale(1.1111,1)" font-family="'Liberation Serif', serif" font-size="18" font-weight="normal" font-style="italic" fill="#262626" text-anchor="start" >x</text>
<rect x="366" y="872" width="1582" height="600" fill="#ffffff" />
<rect x="366" y="872" width="1582" height="2" fill="#696969" />
<rect x="366" y="872" width="2" height="600" fill="#696969" />
<rect x="1946" y="872" width="2" height="600" fill="#696969" />
<text transform="translate(936.3,915.4) scale(1.0002,1)" font-family="'Liberation Sans', sans-serif" font-size="27" font-weight="bold" font-style="normal" fill="#000" text-anchor="start" >Virtual Subject Response: Toxicity</text>
<rect x="818" y="960" width="44" height="4" fill="#ff0000" />
<text transform="translate(872.26,971.4) scale(0.9399,1)" font-family="'Liberation Sans', sans-serif" font-size="24" font-weight="normal" font-style="normal" fill="#000" text-anchor="start" >Pr(Tox 3+)</text>
<rect x="1004" y="960" width="44" height="4" fill="#ffb6c1" />
<text transform="translate(1057.46,971.4) scale(0.9399,1)" font-family="'Liberation Sans', sans-serif" font-size="24" font-weight="normal" font-style="normal" fill="#000" text-anchor="start" >Pr(Tox 2+)</text>
<rect x="1190" y="960" width="44" height="4" fill="#8b0000" />
<text transform="translate(1243.94,971.4) scale(0.9575,1)" font-family="'Liberation Sans', sans-serif" font-size="24" font-weight="normal" font-style="normal" fill="#000" text-anchor="start" >Pr(Tox 4)</text>
<rect x="1364" y="960" width="44" height="4" fill="#0000ff" />
<text transform="translate(1419.0,971.4) scale(0.9338,1)" font-family="'Liberation Sans', sans-serif" font-size="24" font-weight="normal" font-style="normal" fill="#000" text-anchor="start" >Target</text>
<rect x="522" y="1322.0" width="16" height="2" fill="#000" />
<rect x="540" y="1262.3" width="1358" height="2" fill="#c8c8c8" />
<rect x="522" y="1262.3" width="16" height="2" fill="#000" />
<rect x="540" y="1202.6" width="1358" height="2" fill="#c8c8c8" />
<rect x="522" y="1202.6" width="16" height="2" fill="#000" />
<rect x="540" y="1142.9" width="1358" height="2" fill="#c8c8c8" />
<rect x="522" y="1142.9" width="16" height="2" fill="#000" />
<rect x="540" y="1083.2" width="1358" height="2" fill="#c8c8c8" />
<rect x="522" y="1083.2" width="16" height="2" fill="#000" />
<rect x="540" y="1023.5" width="1358" height="2" fill="#c8c8c8" />
<rect x="522" y="1023.5" width="16" height="2" fill="#000" />
<text transform="translate(516,1332.3) scale(0.93,1)" font-family="'Liberation Sans', sans-serif" font-size="28" font-weight="normal" font-style="normal" fill="#000" text-anchor="end" >0</text>
<text transform="translate(516,1272.6) scale(0.93,1)" font-family="'Liberation Sans', sans-serif" font-size="28" font-weight="normal" font-style="normal" fill="#000" text-anchor="end" >0.2</text>
<text transform="translate(516,1212.8999999999999) scale(0.93,1)" font-family="'Liberation Sans', sans-serif" font-size="28" font-weight="normal" font-style="normal" fill="#000" text-anchor="end" >0.4</text>
<text transform="translate(516,1153.2) scale(0.93,1)" font-family="'Liberation Sans', sans-serif" font-size="28" font-weight="normal" font-style="normal" fill="#000" text-anchor="end" >0.6</text>
<text transform="translate(516,1093.5) scale(0.93,1)" font-family="'Liberation Sans', sans-serif" font-size="28" font-weight="normal" font-style="normal" fill="#000" text-anchor="end" >0.8</text>
<text transform="translate(516,1033.8) scale(0.93,1)" font-family="'Liberation Sans', sans-serif" font-size="28" font-weight="normal" font-style="normal" fill="#000" text-anchor="end" >1</text>
<rect x="538" y="1024" width="2" height="300" fill="#000" />
<rect x="538" y="1322" width="1360" height="2" fill="#000" />
<rect x="731.5" y="1324" width="2" height="6" fill="#000" />
<text transform="translate(731.2,1353.6) scale(0.87,1)" font-family="'Liberation Sans', sans-serif" font-size="28" font-weight="normal" font-style="normal" fill="#000" text-anchor="middle" >Dose 1</text>
<rect x="925.5" y="1324" width="2" height="6" fill="#000" />
<text transform="translate(925.2,1353.6) scale(0.87,1)" font-family="'Liberation Sans', sans-serif" font-size="28" font-weight="normal" font-style="normal" fill="#000" text-anchor="middle" >Dose 2</text>
<rect x="1119.5" y="1324" width="2" height="6" fill="#000" />
<text transform="translate(1119.2,1353.6) scale(0.87,1)" font-family="'Liberation Sans', sans-serif" font-size="28" font-weight="normal" font-style="normal" fill="#000" text-anchor="middle" >Dose 3</text>
<rect x="1313.5" y="1324" width="2" height="6" fill="#000" />
<text transform="translate(1313.2,1353.6) scale(0.87,1)" font-family="'Liberation Sans', sans-serif" font-size="28" font-weight="normal" font-style="normal" fill="#000" text-anchor="middle" >Dose 4</text>
<rect x="1507.5" y="1324" width="2" height="6" fill="#000" />
<text transform="translate(1507.2,1353.6) scale(0.87,1)" font-family="'Liberation Sans', sans-serif" font-size="28" font-weight="normal" font-style="normal" fill="#000" text-anchor="middle" >Dose 5</text>
<rect x="1701.5" y="1324" width="2" height="6" fill="#000" />
<text transform="translate(1701.2,1353.6) scale(0.87,1)" font-family="'Liberation Sans', sans-serif" font-size="28" font-weight="normal" font-style="normal" fill="#000" text-anchor="middle" >Dose 6</text>
<text transform="translate(449.5,1172.5) rotate(-90) scale(0.81,1)" font-family="'Liberation Sans', sans-serif" font-size="26" text-anchor="middle">Probability</text>
<polyline points="732.5,1318.1 926.5,1317.3 1120.5,1291.7 1314.5,1256.4 1508.5,1173.6 1702.5,1044.5" fill="none" stroke="#ffb6c1" stroke-width="4" stroke-linejoin="miter"/>
<polyline points="732.5,1320.0 926.5,1320.0 1120.5,1308.1 1314.5,1293.2 1508.5,1248.4 1702.5,1084.2" fill="none" stroke="#ff0000" stroke-width="4" stroke-linejoin="miter"/>
<polyline points="732.5,1320.0 926.5,1321.2 1120.5,1317.4 1314.5,1315.8 1508.5,1310.1 1702.5,1249.2" fill="none" stroke="#8b0000" stroke-width="4" stroke-linejoin="miter"/>
<rect x="732.5" y="1262" width="970.0" height="4" fill="#0000ff" />
<rect x="1786" y="1348" width="26" height="32" fill="#ffffff" />
<rect x="1786" y="1348" width="26" height="2" fill="#333333" />
<rect x="1786" y="1378" width="26" height="2" fill="#333333" />
<rect x="1786" y="1348" width="2" height="32" fill="#333333" />
<rect x="1810" y="1348" width="2" height="32" fill="#333333" />
<text transform="translate(1824.15,1369) scale(0.8515,1)" font-family="'Liberation Sans', sans-serif" font-size="24" font-weight="normal" font-style="normal" fill="#000" text-anchor="start" >Plot log(x)</text>
</g>
<rect x="1972" y="248" width="32" height="1126" fill="#f0f0f0" />
<rect x="1972" y="282" width="30" height="989" fill="#cdcdcd" />
<path d="M1987 260 L1994 267 L1994 272 L1987 265 L1980 272 L1980 267 Z" fill="#606060"/>
<path d="M1980 1350 L1987 1357 L1994 1350 L1994 1355 L1987 1362 L1980 1355 Z" fill="#606060"/>
<rect x="32" y="1374" width="1972" height="32" fill="#f0f0f0" />
<rect x="66" y="1374" width="1868" height="30" fill="#cdcdcd" />
<path d="M54 1382 L49 1382 L42 1389 L49 1396 L54 1396 L47 1389 Z" fill="#606060"/>
<path d="M1948 1382 L1953 1382 L1960 1389 L1953 1396 L1948 1396 L1955 1389 Z" fill="#606060"/>
<rect x="1" y="1" width="2034" height="1436" fill="none" stroke="#c2c2c2" stroke-width="2"/>
</svg>
</body></html>
